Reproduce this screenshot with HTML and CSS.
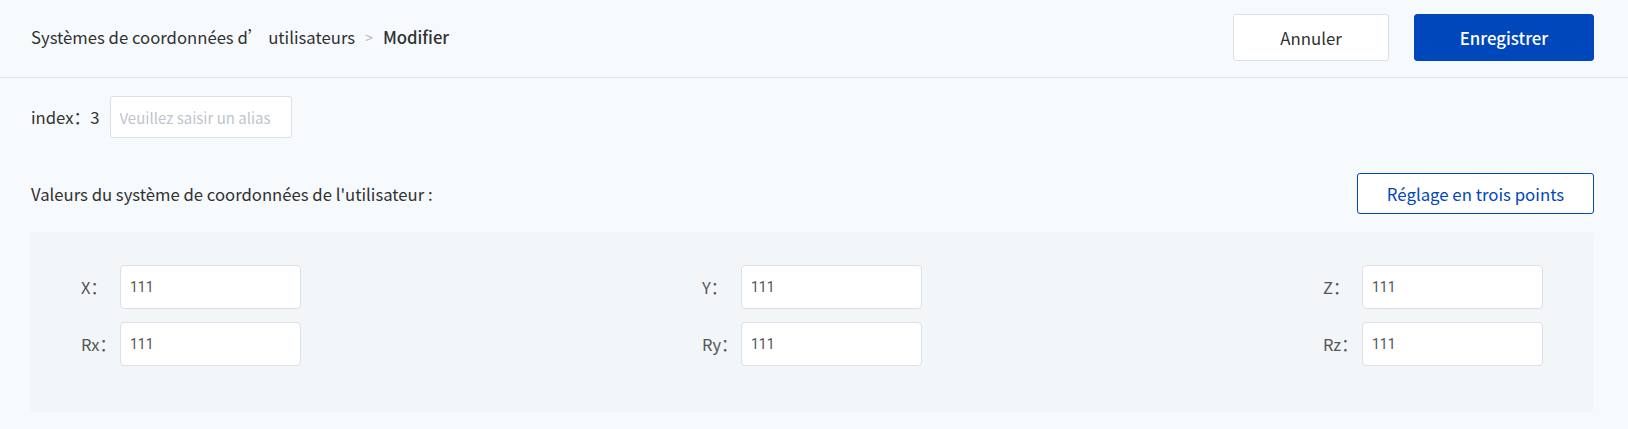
FILE: index.html
```html
<!DOCTYPE html>
<html lang="fr">
<head>
<meta charset="utf-8">
<link rel="stylesheet" href="styles.css">
</head>
<body>
<div class="page">
  <header class="topbar">
    <nav class="crumbs">
      <span class="crumb">Systèmes de coordonnées d’ utilisateurs</span>
      <span class="sep">&gt;</span>
      <span class="crumb current">Modifier</span>
    </nav>
    <div class="actions">
      <button class="btn btn-default">Annuler</button>
      <button class="btn btn-primary">Enregistrer</button>
    </div>
  </header>
  <main class="content">
    <div class="index-row">
      <span class="index-label">index：3</span>
      <input class="alias" type="text" placeholder="Veuillez saisir un alias">
    </div>
    <div class="section-head">
      <span class="section-title">Valeurs du système de coordonnées de l'utilisateur :</span>
      <button class="btn btn-outline">Réglage en trois points</button>
    </div>
    <div class="panel">
      <div class="grid">
        <div class="field"><span class="lbl">X：</span><input class="val" type="text" value="111"></div>
        <div class="field"><span class="lbl">Y：</span><input class="val" type="text" value="111"></div>
        <div class="field"><span class="lbl">Z：</span><input class="val" type="text" value="111"></div>
        <div class="field"><span class="lbl">Rx：</span><input class="val" type="text" value="111"></div>
        <div class="field"><span class="lbl">Ry：</span><input class="val" type="text" value="111"></div>
        <div class="field"><span class="lbl">Rz：</span><input class="val" type="text" value="111"></div>
      </div>
    </div>
  </main>
</div>
</body>
</html>
```
FILE: styles.css
```css
* { box-sizing: border-box; }
html, body {
  margin: 0;
  background: #f7fafd;
  font-family: "Noto Sans CJK SC", "Noto Sans", sans-serif;
  color: #333;
}
.page { width: 1628px; height: 429px; }
.topbar {
  height: 78px;
  border-bottom: 1px solid #dfe3e8;
  display: flex;
  align-items: center;
  justify-content: space-between;
  padding: 0 34px 0 31px;
}
.crumbs { display: flex; align-items: center; font-size: 16.7px; color: #303133; margin-top: -3px; }
.sep { color: #b0b3b8; margin: 0 10px 0 10px; font-size: 14px; }
.current { font-weight: 500; }
.actions { display: flex; gap: 25px; margin-top: -2px; }
.btn {
  font-family: "Noto Sans CJK SC", "Noto Sans", sans-serif;
  font-size: 16.8px;
  border-radius: 3px;
  cursor: pointer;
}
.btn-default {
  width: 156px; height: 47px;
  background: #fff;
  border: 1px solid #dcdfe6;
  color: #303133;
}
.btn-primary {
  width: 180px; height: 47px;
  background: #0047bb;
  border: 1px solid #0047bb;
  color: #fff;
  font-weight: 500;
}
.content { padding: 0 35px 0 30px; }
.index-row {
  display: flex;
  align-items: center;
  margin-top: 18px;
  padding-left: 1px;
}
.index-label { font-size: 16.7px; color: #333; margin-right: 10px; }
.alias {
  width: 182px; height: 42px;
  border: 1px solid #dcdfe6;
  border-radius: 3px;
  background: #fff;
  padding: 0 9px;
  font-family: "Noto Sans CJK SC", "Noto Sans", sans-serif;
  font-size: 15px;
  outline: none;
}
.alias::placeholder { color: #c0c4cc; }
.section-head {
  display: flex;
  align-items: center;
  justify-content: space-between;
  margin-top: 35px;
  padding-left: 1px;
}
.section-title { font-size: 16.7px; color: #303133; }
.btn-outline {
  width: 237px; height: 41px;
  background: #fff;
  border: 1px solid #0047bb;
  color: #0047bb;
  margin-right: -1px;
}
.panel {
  margin-top: 18px;
  height: 180px;
  background: #f3f6f9;
  border-radius: 2px;
  padding: 33px 50px 0 51px;
}
.grid {
  display: grid;
  grid-template-columns: auto auto auto;
  justify-content: space-between;
  row-gap: 13px;
}
.field { display: flex; align-items: center; }
.lbl {
  width: 39px;
  font-size: 16.5px;
  color: #555;
  white-space: nowrap;
}
.val {
  width: 181px; height: 44px;
  border: 1px solid #dcdfe6;
  border-radius: 4px;
  background: #fff;
  padding: 0 9px;
  font-family: Roboto, "Noto Sans", sans-serif;
  font-size: 14px;
  color: #555;
  outline: none;
}
```
